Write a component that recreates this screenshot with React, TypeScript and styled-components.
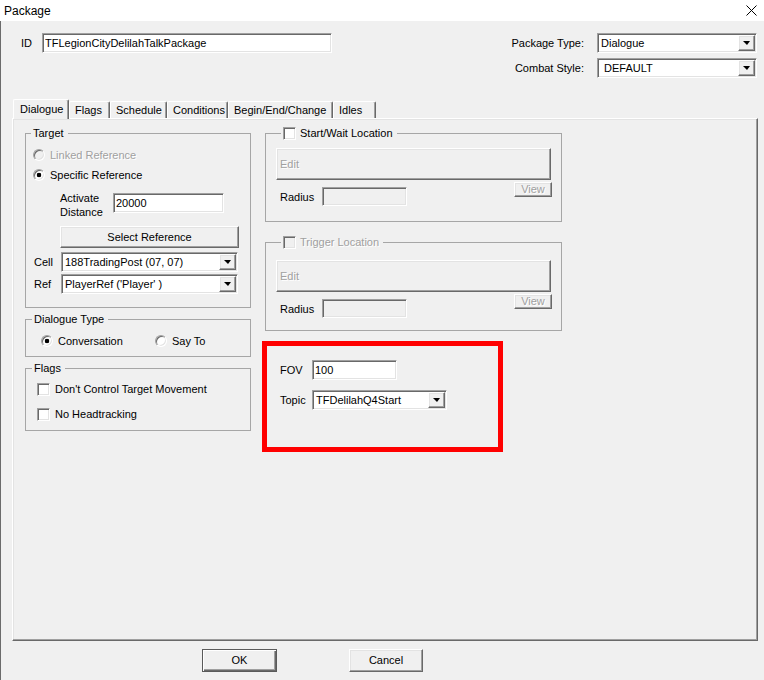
import styled, { createGlobalStyle, css } from 'styled-components';

const GlobalStyle = createGlobalStyle`
  html, body {
    margin: 0;
    padding: 0;
    background: #f0f0f0;
  }
  body {
    font-family: "Liberation Sans", Arial, sans-serif;
    font-size: 11px;
    color: #000;
  }
  * {
    box-sizing: border-box;
  }
`;

const sunken = css`
  border: 1px solid;
  border-color: #a0a0a0 #ffffff #ffffff #a0a0a0;
  box-shadow: inset 1px 1px 0 #696969, inset -1px -1px 0 #e3e3e3;
`;

const raised = css`
  border: 1px solid;
  border-color: #ffffff #696969 #696969 #ffffff;
  box-shadow: inset -1px -1px 0 #a0a0a0, inset 1px 1px 0 #e3e3e3;
`;

const disabledText = css`
  color: #a0a0a0;
  text-shadow: 1px 1px 0 #ffffff;
`;

const Window = styled.div`
  width: 764px;
  height: 680px;
  background: #f0f0f0;
  box-shadow: inset 1px 0 0 #6b6b6b;
  display: flex;
  flex-direction: column;
  overflow: hidden;
`;

const TitleBar = styled.div`
  height: 21px;
  background: #ffffff;
  display: flex;
  align-items: center;
  justify-content: space-between;
  padding: 0 7px 0 4px;
  font-size: 12px;
`;

const Header = styled.div`
  height: 78px;
  display: flex;
  justify-content: space-between;
  align-items: flex-start;
  padding: 12px 7px 0 21px;
`;

const IdField = styled.div`
  display: flex;
  align-items: center;
  gap: 10px;
`;

const TypeGrid = styled.div`
  display: grid;
  grid-template-columns: auto 160px;
  column-gap: 13px;
  row-gap: 5px;
  align-items: center;
  justify-items: end;
`;

const TextBox = styled.input<{ $w: number; $h?: number; $off?: boolean }>`
  ${sunken};
  width: ${(p) => p.$w}px;
  height: ${(p) => p.$h ?? 20}px;
  background: ${(p) => (p.$off ? '#f0f0f0' : '#ffffff')};
  font: inherit;
  color: #000;
  padding: 0 2px;
  margin: 0;
  outline: none;
`;

const ComboBox = styled.div<{ $w: number; $h?: number }>`
  ${sunken};
  width: ${(p) => p.$w}px;
  height: ${(p) => p.$h ?? 20}px;
  background: #ffffff;
  padding: 1px;
  display: flex;
  align-items: stretch;
  justify-self: start;
`;

const ComboText = styled.span`
  flex: 1;
  display: flex;
  align-items: center;
  padding-left: 2px;
  white-space: pre;
`;

const DropButton = styled.span`
  ${raised};
  width: 17px;
  background: #f0f0f0;
  display: flex;
  align-items: center;
  justify-content: center;
`;

const Arrow = styled.span`
  width: 0;
  height: 0;
  border-left: 4px solid transparent;
  border-right: 3px solid transparent;
  border-top: 4px solid #000;
`;

const TabStrip = styled.div`
  height: 20px;
  display: flex;
  align-items: flex-end;
  padding-left: 13px;
  margin-bottom: -1px;
`;

const Tab = styled.div<{ $w: number; $active?: boolean }>`
  position: relative;
  z-index: ${(p) => (p.$active ? 2 : 0)};
  width: ${(p) => p.$w}px;
  height: ${(p) => (p.$active ? 20 : 17)}px;
  margin-bottom: ${(p) => (p.$active ? 0 : 1)}px;
  padding: ${(p) => (p.$active ? '3px 0 0 6px' : '2px 0 0 5px')};
  line-height: 13px;
  background: #f0f0f0;
  border-top: 1px solid #ffffff;
  border-left: 1px solid #ffffff;
  border-right: 1px solid #696969;
  border-radius: 2px 2px 0 0;
  box-shadow: inset -1px 0 0 #a0a0a0;
  white-space: nowrap;
`;

const Panel = styled.div`
  position: relative;
  z-index: 1;
  height: 523px;
  margin: 0 6px 0 12px;
  border: 1px solid;
  border-color: #ffffff #696969 #696969 #ffffff;
  box-shadow: inset -1px -1px 0 #a0a0a0, inset 1px 1px 0 #e3e3e3;
  display: flex;
  align-items: flex-start;
  gap: 14px;
  padding: 8px 0 0 12px;
`;

const Column = styled.div<{ $w: number; $gap: number }>`
  width: ${(p) => p.$w}px;
  display: flex;
  flex-direction: column;
  gap: ${(p) => p.$gap}px;
`;

const GroupBox = styled.fieldset<{ $after?: number }>`
  margin: 0 0 ${(p) => p.$after ?? 0}px;
  padding: 0;
  min-width: 0;
  border: 1px solid #a6a6a6;
`;

const Legend = styled.legend<{ $indent: number; $off?: boolean }>`
  margin-left: ${(p) => p.$indent}px;
  padding: 0 4px 0 2px;
  line-height: 13px;
  display: flex;
  align-items: center;
  gap: 4px;
  ${(p) => p.$off && disabledText};
`;

const GroupBody = styled.div<{ $pad: string }>`
  padding: ${(p) => p.$pad};
  display: flex;
  flex-direction: column;
`;

const OptionRow = styled.label<{ $top?: number; $w?: number; $off?: boolean }>`
  height: 20px;
  margin-top: ${(p) => p.$top ?? 0}px;
  width: ${(p) => (p.$w ? `${p.$w}px` : 'auto')};
  display: flex;
  align-items: center;
  gap: 5px;
  ${(p) => p.$off && disabledText};
`;

const RadioDot = styled.span<{ $checked?: boolean; $off?: boolean }>`
  width: 12px;
  height: 12px;
  border-radius: 50%;
  flex: none;
  ${sunken};
  background: ${(p) =>
    p.$checked
      ? 'radial-gradient(circle, #000 0 2px, #fff 2.6px)'
      : p.$off
        ? '#f0f0f0'
        : '#ffffff'};
`;

const CheckBox = styled.span<{ $off?: boolean }>`
  width: 13px;
  height: 13px;
  flex: none;
  ${sunken};
  background: ${(p) => (p.$off ? '#f0f0f0' : '#ffffff')};
`;

const Line = styled.div<{ $top?: number; $indent?: number }>`
  display: flex;
  align-items: flex-start;
  margin-top: ${(p) => p.$top ?? 0}px;
  margin-left: ${(p) => p.$indent ?? 0}px;
`;

const FieldLabel = styled.span<{ $w: number; $h?: number }>`
  width: ${(p) => p.$w}px;
  height: ${(p) => p.$h ?? 20}px;
  display: flex;
  align-items: center;
  flex: none;
`;

const StackLabel = styled.span`
  width: 53px;
  line-height: 14px;
`;

const Button = styled.button<{ $w: number; $h: number; $off?: boolean; $left?: boolean; $default?: boolean }>`
  ${raised};
  width: ${(p) => p.$w}px;
  height: ${(p) => p.$h}px;
  margin: 0;
  padding: ${(p) => (p.$left ? '0 0 0 3px' : '0')};
  background: #f0f0f0;
  font: inherit;
  line-height: 13px;
  color: #000;
  text-align: ${(p) => (p.$left ? 'left' : 'center')};
  ${(p) => p.$off && disabledText};
  ${(p) =>
    p.$default &&
    css`
      border: 1px solid #5a5a5a;
      box-shadow: inset 1px 1px 0 #ffffff, inset -1px -1px 0 #696969, inset -2px -2px 0 #a0a0a0;
    `};
`;

const LocFooter = styled.div`
  display: flex;
  justify-content: space-between;
  align-items: flex-start;
  margin-top: 2px;
`;

const RadiusField = styled.div`
  display: flex;
  align-items: center;
  margin-top: 5px;
  padding-left: 4px;
`;

const Annotation = styled.div`
  width: 241px;
  height: 111px;
  margin-left: -3px;
  border: 5px solid #ff0000;
  padding: 14px 0 0 13px;
  display: flex;
  flex-direction: column;
  gap: 10px;
`;

const ButtonRow = styled.div`
  display: flex;
  gap: 72px;
  padding: 8px 0 0 202px;
`;

function Combo({ value, width, height }: { value: string; width: number; height?: number }) {
  return (
    <ComboBox $w={width} $h={height}>
      <ComboText>{value}</ComboText>
      <DropButton>
        <Arrow />
      </DropButton>
    </ComboBox>
  );
}

type LocationProps = { title: string; off?: boolean; top: number; bottom: number; after?: number };

function LocationGroup({ title, off, top, bottom, after }: LocationProps) {
  return (
    <GroupBox $after={after}>
      <Legend $indent={15} $off={off}>
        <CheckBox $off={off} />
        {title}
      </Legend>
      <GroupBody $pad={`${top}px 9px ${bottom}px 10px`}>
        <Button $w={275} $h={32} $off $left>
          Edit
        </Button>
        <LocFooter>
          <RadiusField>
            <FieldLabel $w={42} $h={19}>
              Radius
            </FieldLabel>
            <TextBox $w={85} $h={19} $off readOnly value="" />
          </RadiusField>
          <Button $w={38} $h={15} $off>
            View
          </Button>
        </LocFooter>
      </GroupBody>
    </GroupBox>
  );
}

const tabs = [
  { label: 'Dialogue', w: 56, active: true },
  { label: 'Flags', w: 41 },
  { label: 'Schedule', w: 57 },
  { label: 'Conditions', w: 61 },
  { label: 'Begin/End/Change', w: 105 },
  { label: 'Idles', w: 43 },
];

export default function App() {
  return (
    <Window>
      <GlobalStyle />
      <TitleBar>
        <span>Package</span>
        <svg width="11" height="11" viewBox="0 0 11 11">
          <path d="M0.5 0.5 L10.5 10.5 M10.5 0.5 L0.5 10.5" stroke="#000" strokeWidth="1" />
        </svg>
      </TitleBar>

      <Header>
        <IdField>
          <span>ID</span>
          <TextBox $w={290} readOnly value="TFLegionCityDelilahTalkPackage" />
        </IdField>
        <TypeGrid>
          <span>Package Type:</span>
          <Combo value="Dialogue" width={160} />
          <span>Combat Style:</span>
          <Combo value=" DEFAULT" width={160} />
        </TypeGrid>
      </Header>

      <TabStrip>
        {tabs.map((t) => (
          <Tab key={t.label} $w={t.w} $active={t.active}>
            {t.label}
          </Tab>
        ))}
      </TabStrip>

      <Panel>
        <Column $w={226} $gap={5}>
          <GroupBox>
            <Legend $indent={5}>Target</Legend>
            <GroupBody $pad="5px 10px 13px 7px">
              <OptionRow $off>
                <RadioDot $off />
                Linked Reference
              </OptionRow>
              <OptionRow>
                <RadioDot $checked />
                Specific Reference
              </OptionRow>
              <Line $top={6} $indent={27}>
                <StackLabel>
                  Activate
                  <br />
                  Distance
                </StackLabel>
                <TextBox $w={111} style={{ marginTop: 2 }} readOnly value="20000" />
              </Line>
              <Line $top={7} $indent={27}>
                <Button $w={179} $h={22}>
                  Select Reference
                </Button>
              </Line>
              <Line $top={4} $indent={1}>
                <FieldLabel $w={27}>Cell</FieldLabel>
                <Combo value="188TradingPost (07, 07)" width={177} />
              </Line>
              <Line $top={2} $indent={1}>
                <FieldLabel $w={27}>Ref</FieldLabel>
                <Combo value="PlayerRef ('Player' )" width={177} />
              </Line>
            </GroupBody>
          </GroupBox>

          <GroupBox>
            <Legend $indent={6}>Dialogue Type</Legend>
            <GroupBody $pad="5px 0 5px 15px">
              <Line>
                <OptionRow $w={114}>
                  <RadioDot $checked />
                  Conversation
                </OptionRow>
                <OptionRow>
                  <RadioDot />
                  Say To
                </OptionRow>
              </Line>
            </GroupBody>
          </GroupBox>

          <GroupBox>
            <Legend $indent={6}>Flags</Legend>
            <GroupBody $pad="4px 0 6px 11px">
              <OptionRow>
                <CheckBox />
                Don't Control Target Movement
              </OptionRow>
              <OptionRow $top={5}>
                <CheckBox />
                No Headtracking
              </OptionRow>
            </GroupBody>
          </GroupBox>
        </Column>

        <Column $w={297} $gap={10}>
          <LocationGroup title="Start/Wait Location" top={8} bottom={15} after={4} />
          <LocationGroup title="Trigger Location" off top={11} bottom={12} />
          <Annotation>
            <Line>
              <FieldLabel $w={32}>FOV</FieldLabel>
              <TextBox $w={85} readOnly value="100" />
            </Line>
            <Line>
              <FieldLabel $w={32}>Topic</FieldLabel>
              <Combo value="TFDelilahQ4Start" width={135} />
            </Line>
          </Annotation>
        </Column>
      </Panel>

      <ButtonRow>
        <Button $w={75} $h={23} $default>
          OK
        </Button>
        <Button $w={74} $h={23}>
          Cancel
        </Button>
      </ButtonRow>
    </Window>
  );
}
